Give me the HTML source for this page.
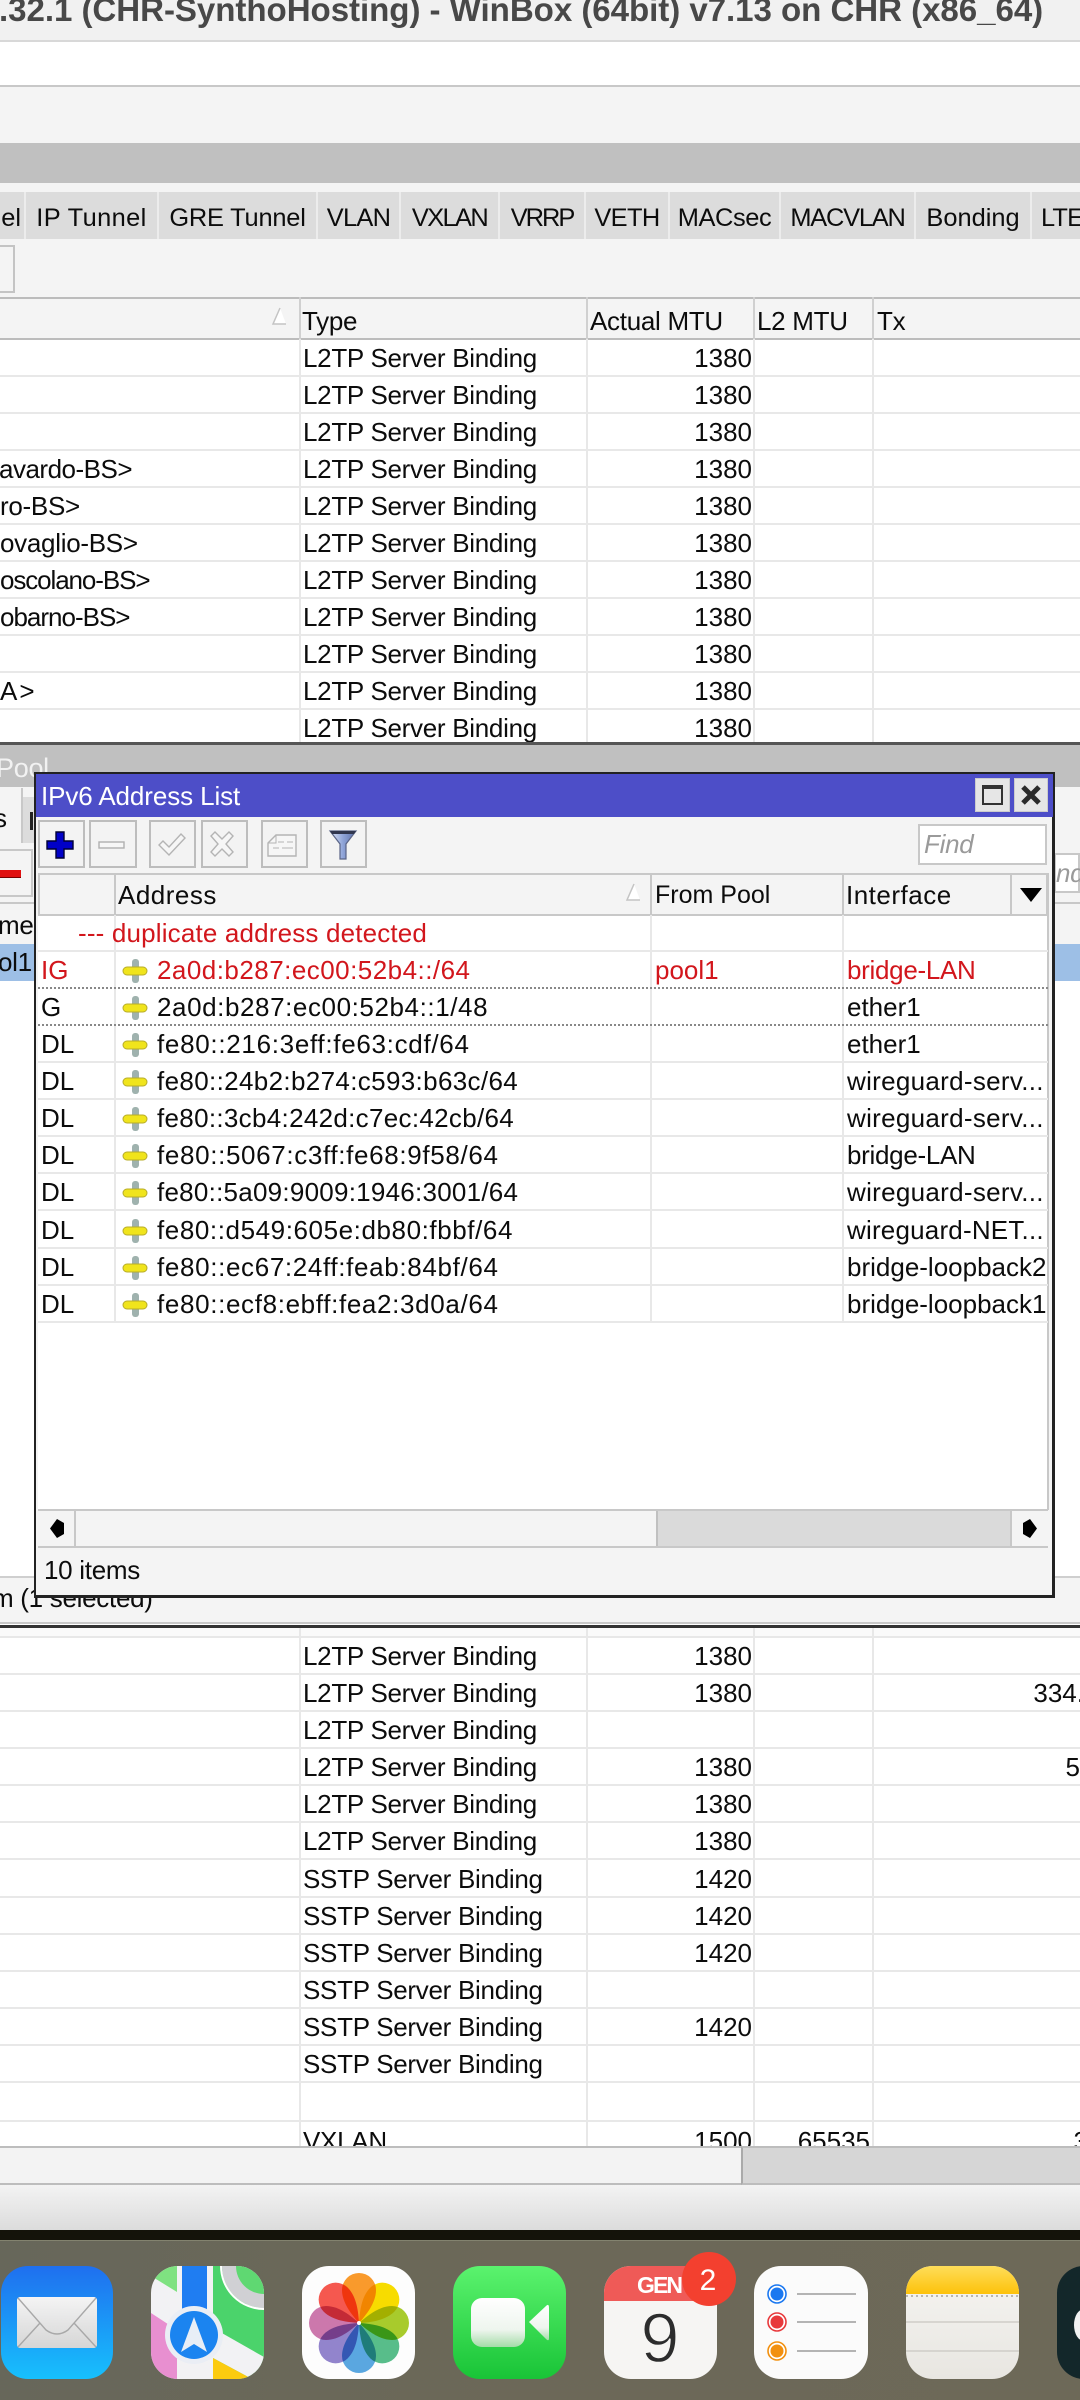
<!DOCTYPE html>
<html><head><meta charset="utf-8"><title>WinBox</title>
<style>
html,body{margin:0;padding:0;background:#fff}
#p{position:relative;width:1080px;height:2400px;overflow:hidden;background:#fff;font-family:"Liberation Sans",sans-serif;font-size:26px;letter-spacing:-.29px;color:#0c0c0c}
.a{position:absolute}
.t{position:absolute;white-space:nowrap;line-height:37px;height:37px}
.r{position:absolute;left:0;width:1080px;border-bottom:2px solid #e8e8e8;box-sizing:content-box;height:35px}
.ty{position:absolute;left:303px;top:0;line-height:36px;white-space:nowrap}
.mt{position:absolute;right:328px;top:0;line-height:36px;white-space:nowrap;letter-spacing:0}
.n{position:absolute;left:0;top:0;line-height:36px;white-space:nowrap}
.v{position:absolute;width:2px;background:#e8e8e8}
.tab{position:absolute;top:192px;height:47px;background:#dcdcdc;border-right:2px solid #ececec;font-size:25.4px;letter-spacing:0;line-height:53px;text-align:center;box-sizing:border-box;white-space:nowrap}
.w{font-size:26px;letter-spacing:0}
.wr{position:absolute;left:38px;width:1010px;height:35px;border-bottom:2px solid #e8e8e8}
.wr.d{border-bottom:2px dotted #888}
.wr span{position:absolute;top:0;line-height:36px;white-space:nowrap}
.f{left:3px}.ad{left:119px;letter-spacing:.3px}.po{left:617px}.if{left:809px}
.ic{position:absolute;left:84px;top:6px;width:26px;height:26px}
.red{color:#d2161c}
.btn{position:absolute;top:820px;height:48px;box-sizing:border-box;border:2px solid #bdbdbd;background:#f3f3f3}
</style></head><body><div id="p">

<!-- top chrome -->
<div class="a" style="left:0;top:0;width:1080px;height:42px;background:#f1f1f1;border-bottom:2px solid #d8d8d8;box-sizing:border-box"></div>
<div class="t" style="left:-1px;top:-8px;font-size:33.1px;font-weight:bold;color:#484848;letter-spacing:-.05px">.32.1 (CHR-SynthoHosting) - WinBox (64bit) v7.13 on CHR (x86_64)</div>
<div class="a" style="left:0;top:42px;width:1080px;height:45px;background:#fff;border-bottom:2px solid #c8c8c8;box-sizing:border-box"></div>
<div class="a" style="left:0;top:87px;width:1080px;height:56px;background:#f4f4f4"></div>
<div class="a" style="left:0;top:143px;width:1080px;height:40px;background:#c0c0c0"></div>
<div class="a" style="left:0;top:183px;width:1080px;height:114px;background:#f4f4f4"></div>

<!-- tabs -->
<div class="tab" style="left:-40px;width:66px;text-align:right;padding-right:3px">el</div>
<div class="tab" style="left:26px;width:133px;letter-spacing:.4px">IP Tunnel</div>
<div class="tab" style="left:159px;width:159px;letter-spacing:-.2px">GRE Tunnel</div>
<div class="tab" style="left:318px;width:83px;letter-spacing:-.7px">VLAN</div>
<div class="tab" style="left:401px;width:99px;letter-spacing:-1.6px">VXLAN</div>
<div class="tab" style="left:500px;width:86px;letter-spacing:-2px">VRRP</div>
<div class="tab" style="left:586px;width:84px;letter-spacing:-.6px">VETH</div>
<div class="tab" style="left:670px;width:111px;letter-spacing:-.4px">MACsec</div>
<div class="tab" style="left:781px;width:135px;letter-spacing:-1.2px">MACVLAN</div>
<div class="tab" style="left:916px;width:116px">Bonding</div>
<div class="tab" style="left:1032px;width:60px;text-align:left;padding-left:9px;letter-spacing:-.8px">LTE</div>
<div class="a" style="left:-20px;top:245px;width:35px;height:48px;box-sizing:border-box;border:2px solid #c4c4c4;background:#f4f4f4"></div>

<!-- upper table -->
<div class="a" style="left:0;top:297px;width:1080px;background:#f4f4f4;border-top:2px solid #bcbcbc;border-bottom:2px solid #bcbcbc;box-sizing:content-box;height:39px"></div>
<svg class="a" style="left:270px;top:306px" width="18" height="20"><path d="M10 2 L3 18 L16 18" fill="#fff" stroke="#c4c4c4" stroke-width="1.5"/></svg>
<div class="t" style="left:302px;top:303px;line-height:37px">Type</div>
<div class="t" style="left:590px;top:303px;line-height:37px">Actual MTU</div>
<div class="t" style="left:757px;top:303px;line-height:37px">L2 MTU</div>
<div class="t" style="left:877px;top:303px;line-height:37px">Tx</div>
<div class="v" style="left:299px;top:297px;height:42px;background:#d0d0d0"></div>
<div class="v" style="left:586px;top:297px;height:42px;background:#d0d0d0"></div>
<div class="v" style="left:753px;top:297px;height:42px;background:#d0d0d0"></div>
<div class="v" style="left:872px;top:297px;height:42px;background:#d0d0d0"></div>
<div class="v" style="left:299px;top:339px;height:404px"></div>
<div class="v" style="left:586px;top:339px;height:404px"></div>
<div class="v" style="left:753px;top:339px;height:404px"></div>
<div class="v" style="left:872px;top:339px;height:404px"></div>

<div class="r" style="top:340px"><span class="ty">L2TP Server Binding</span><span class="mt">1380</span></div>
<div class="r" style="top:377px"><span class="ty">L2TP Server Binding</span><span class="mt">1380</span></div>
<div class="r" style="top:414px"><span class="ty">L2TP Server Binding</span><span class="mt">1380</span></div>
<div class="r" style="top:451px"><span class="n" style="left:-1px;letter-spacing:-.5px">avardo-BS&gt;</span><span class="ty">L2TP Server Binding</span><span class="mt">1380</span></div>
<div class="r" style="top:488px"><span class="n">ro-BS&gt;</span><span class="ty">L2TP Server Binding</span><span class="mt">1380</span></div>
<div class="r" style="top:525px"><span class="n">ovaglio-BS&gt;</span><span class="ty">L2TP Server Binding</span><span class="mt">1380</span></div>
<div class="r" style="top:562px"><span class="n" style="letter-spacing:-1.1px">oscolano-BS&gt;</span><span class="ty">L2TP Server Binding</span><span class="mt">1380</span></div>
<div class="r" style="top:599px"><span class="n" style="letter-spacing:-1px">obarno-BS&gt;</span><span class="ty">L2TP Server Binding</span><span class="mt">1380</span></div>
<div class="r" style="top:636px"><span class="ty">L2TP Server Binding</span><span class="mt">1380</span></div>
<div class="r" style="top:673px"><span class="n" style="letter-spacing:2px">A&gt;</span><span class="ty">L2TP Server Binding</span><span class="mt">1380</span></div>
<div class="r" style="top:710px;height:33px;overflow:hidden;border:0"><span class="ty">L2TP Server Binding</span><span class="mt">1380</span></div>

<!-- background IP Pool window -->
<div class="a" style="left:0;top:742px;width:1080px;height:3px;background:#555"></div>
<div class="a" style="left:0;top:745px;width:1080px;height:42px;background:#c0c0c0"></div>
<div class="a" style="left:0;top:787px;width:1080px;height:157px;background:#f4f4f4"></div>
<div class="t" style="left:-4px;top:750px;color:#f2f2f2;font-size:27px">Pool</div>
<div class="a" style="left:-10px;top:788px;width:31px;height:55px;background:#f4f4f4;border-right:2px solid #c8c8c8"></div>
<div class="t" style="left:-6px;top:800px;font-size:26px">s</div>
<div class="a" style="left:23px;top:797px;width:20px;height:46px;background:#dcdcdc"></div>
<div class="a" style="left:30px;top:812px;width:3px;height:18px;background:#222"></div>
<div class="a" style="left:-10px;top:849px;width:43px;height:48px;box-sizing:border-box;border:2px solid #c8c8c8;background:#f4f4f4"></div>
<div class="a" style="left:0;top:870px;width:21px;height:7px;background:#e01010;border-bottom:1px solid #700"></div>
<div class="a" style="left:0;top:902px;width:1080px;height:2px;background:#c8c8c8"></div>
<div class="t" style="left:-2px;top:907px;font-size:26px">me</div>
<div class="a" style="left:0;top:944px;width:1080px;height:37px;background:#9dbfe6"></div>
<div class="t" style="left:-2px;top:944px;font-size:26px">ol1</div>
<div class="a" style="left:1054px;top:853px;width:26px;height:40px;background:#fff;border:2px solid #c8c8c8;box-sizing:border-box"></div>
<div class="t" style="left:1056px;top:855px;font-size:26px;font-style:italic;color:#9a9a9a">nd</div>

<!-- lower status -->
<div class="a" style="left:0;top:1576px;width:1080px;height:47px;background:#f4f4f4;border-top:2px solid #cfcfcf;box-sizing:border-box"></div>
<div class="t" style="left:-8px;top:1580px;">m (1 selected)</div>
<div class="a" style="left:0;top:1622px;width:1080px;height:2px;background:#c8c8c8"></div>
<div class="a" style="left:0;top:1625px;width:1080px;height:3px;background:#333"></div>

<!-- lower table -->
<div class="a" style="left:0;top:1628px;width:1080px;background:#fafafa;border-bottom:2px solid #e8e8e8;box-sizing:content-box;height:8px"></div>
<div class="v" style="left:299px;top:1628px;height:519px"></div>
<div class="v" style="left:586px;top:1628px;height:519px"></div>
<div class="v" style="left:753px;top:1628px;height:519px"></div>
<div class="v" style="left:872px;top:1628px;height:519px"></div>

<div class="r" style="top:1638px"><span class="ty">L2TP Server Binding</span><span class="mt">1380</span></div>
<div class="r" style="top:1675px"><span class="ty">L2TP Server Binding</span><span class="mt">1380</span><span class="mt" style="right:-4px">334.</span></div>
<div class="r" style="top:1712px"><span class="ty">L2TP Server Binding</span></div>
<div class="r" style="top:1749px"><span class="ty">L2TP Server Binding</span><span class="mt">1380</span><span class="mt" style="right:0">5</span></div>
<div class="r" style="top:1786px"><span class="ty">L2TP Server Binding</span><span class="mt">1380</span></div>
<div class="r" style="top:1823px"><span class="ty">L2TP Server Binding</span><span class="mt">1380</span></div>
<div class="r" style="top:1861px"><span class="ty">SSTP Server Binding</span><span class="mt">1420</span></div>
<div class="r" style="top:1898px"><span class="ty">SSTP Server Binding</span><span class="mt">1420</span></div>
<div class="r" style="top:1935px"><span class="ty">SSTP Server Binding</span><span class="mt">1420</span></div>
<div class="r" style="top:1972px"><span class="ty">SSTP Server Binding</span></div>
<div class="r" style="top:2009px"><span class="ty">SSTP Server Binding</span><span class="mt">1420</span></div>
<div class="r" style="top:2046px"><span class="ty">SSTP Server Binding</span></div>
<div class="r" style="top:2085px"></div>
<div class="r" style="top:2122px;height:25px;overflow:hidden;border:0"><span class="ty" style="top:1px">VXLAN</span><span class="mt" style="top:1px">1500</span><span class="mt" style="top:1px;right:210px">65535</span><span class="mt" style="top:1px;right:-8px">3</span></div>

<!-- bottom bars -->
<div class="a" style="left:0;top:2146px;width:1080px;height:39px;background:#f3f3f3;border-top:2px solid #bdbdbd;border-bottom:2px solid #bdbdbd;box-sizing:border-box"></div>
<div class="a" style="left:741px;top:2146px;width:339px;height:39px;background:#d6d6d6;border-top:2px solid #bdbdbd;border-bottom:2px solid #bdbdbd;border-left:2px solid #aaa;box-sizing:border-box"></div>
<div class="a" style="left:0;top:2185px;width:1080px;height:45px;background:linear-gradient(#f3f3f3,#dcdcdc)"></div>
<div class="a" style="left:0;top:2230px;width:1080px;height:10px;background:#14130a"></div>
<div class="a" style="left:0;top:2240px;width:1080px;height:160px;background:linear-gradient(90deg,#67675a,#6c6858 50%,#6d6958);border-top:1px solid #83836f;box-sizing:border-box"></div>

<!-- IPv6 window -->
<div class="a" style="left:34px;top:772px;width:1021px;height:826px;background:#f4f4f4;border:2px solid #222;border-right:3px solid #222;border-bottom:3px solid #222;box-sizing:border-box"></div>
<div class="a" style="left:36px;top:774px;width:1017px;height:43px;background:#4d4ec8"></div>
<div class="t w" style="left:41px;top:778px;color:#fff;font-size:26px;letter-spacing:-.1px">IPv6 Address List</div>
<div class="a" style="left:975px;top:778px;width:35px;height:34px;box-sizing:border-box;background:#e6e6e6;border:1px solid #ccc"></div>
<div class="a" style="left:982px;top:785px;width:21px;height:20px;box-sizing:border-box;border:2px solid #333;border-top:4px solid #333"></div>
<div class="a" style="left:1014px;top:778px;width:34px;height:34px;box-sizing:border-box;background:#e6e6e6;border:1px solid #ccc"></div>
<svg class="a" style="left:1014px;top:778px" width="34" height="34"><path d="M9 9 L25 25 M25 9 L9 25" stroke="#2a2a2a" stroke-width="5" fill="none"/></svg>

<!-- window toolbar -->
<div class="btn" style="left:38px;width:47px"></div>
<div class="btn" style="left:89px;width:48px"></div>
<div class="btn" style="left:149px;width:47px"></div>
<div class="btn" style="left:201px;width:47px"></div>
<div class="btn" style="left:261px;width:47px"></div>
<div class="btn" style="left:320px;width:47px"></div>
<svg class="a" style="left:30px;top:815px" width="350" height="60">
<defs><linearGradient id="fu" x1="0" y1="0" x2="1" y2="0"><stop offset="0" stop-color="#dfe6f6"/><stop offset=".5" stop-color="#8fa4d8"/><stop offset="1" stop-color="#5a6ea8"/></linearGradient></defs>
<path d="M26 17 h8 v9 h9 v8 h-9 v9 h-8 v-9 h-9 v-8 h9 z" fill="#0000c8" stroke="#000036" stroke-width="1.4"/>
<rect x="69" y="27" width="25" height="6" fill="#f6f6f6" stroke="#b0b0b0" stroke-width="1.4"/>
<path d="M129 30 l4 -4 l6 6 l12 -13 l4 4 l-16 17 z" fill="#f6f6f6" stroke="#b4b4b4" stroke-width="1.4"/>
<path d="M181 21 l4 -4 l7 7 l7 -7 l4 4 l-7 8 l7 8 l-4 4 l-7 -7 l-7 7 l-4 -4 l7 -8 z" fill="#f6f6f6" stroke="#b4b4b4" stroke-width="1.4"/>
<path d="M238 28 l8 -8 h20 v21 h-28 z" fill="#f6f6f6" stroke="#b4b4b4" stroke-width="1.4"/>
<path d="M238 28 h8 v-8 M248 27 h6 M257 27 h6 M243 33 h6 M252 33 h11" fill="none" stroke="#b4b4b4" stroke-width="1"/>
<path d="M300 16 h26 l-10 13 v15 h-6 v-15 z" fill="url(#fu)" stroke="#5a6486" stroke-width="1.2"/>
<path d="M300 16 h26 l-2 3 h-22 z" fill="#30364e"/>
</svg>
<div class="a" style="left:918px;top:824px;width:129px;height:41px;box-sizing:border-box;background:#fff;border:2px solid #c8c8c8"></div>
<div class="t" style="left:924px;top:826px;font-size:26px;font-style:italic;color:#9a9a9a">Find</div>

<!-- window table -->
<div class="a" style="left:38px;top:873px;width:1010px;height:637px;background:#fff"></div>
<div class="a" style="left:38px;top:873px;width:1010px;height:43px;background:#f4f4f4;border:2px solid #c8c8c8;box-sizing:border-box"></div>
<div class="v" style="left:114px;top:873px;height:42px;background:#c8c8c8"></div>
<div class="v" style="left:650px;top:873px;height:42px;background:#c8c8c8"></div>
<div class="v" style="left:842px;top:873px;height:42px;background:#c8c8c8"></div>
<div class="v" style="left:1010px;top:873px;height:42px;background:#c8c8c8"></div>
<div class="t w" style="left:118px;top:877px;letter-spacing:.5px">Address</div>
<div class="t w" style="left:655px;top:877px;font-size:25px">From Pool</div>
<div class="t w" style="left:846px;top:877px;letter-spacing:.5px">Interface</div>
<svg class="a" style="left:624px;top:882px" width="18" height="20"><path d="M10 2 L3 18 L16 18" fill="#fff" stroke="#c4c4c4" stroke-width="1.5"/></svg>
<svg class="a" style="left:1018px;top:886px" width="26" height="18"><path d="M2 2 H24 L13 16 z" fill="#000"/></svg>
<div class="v" style="left:114px;top:915px;height:408px"></div>
<div class="v" style="left:650px;top:915px;height:408px"></div>
<div class="v" style="left:842px;top:915px;height:408px"></div>
<div class="v" style="left:1047px;top:873px;height:637px;background:#c8c8c8"></div>

<svg width="0" height="0" style="position:absolute"><defs><symbol id="ip" viewBox="0 0 26 26"><rect x="10" y="1" width="7" height="24" rx="3" fill="#9fb2ae"/><rect x="1" y="9" width="24" height="8" rx="4" fill="#f0e41c" stroke="#b7ac2a" stroke-width="1"/></symbol></defs></svg>

<div class="wr w" style="top:915px"><span class="red" style="left:40px;letter-spacing:.17px">--- duplicate address detected</span></div>
<div class="wr w d" style="top:952px"><span class="f red">IG</span><svg class="ic"><use href="#ip"/></svg><span class="ad red" style="letter-spacing:.47px">2a0d:b287:ec00:52b4::/64</span><span class="po red">pool1</span><span class="if red" style="letter-spacing:-.3px">bridge-LAN</span></div>
<div class="wr w d" style="top:989px"><span class="f">G</span><svg class="ic"><use href="#ip"/></svg><span class="ad" style="letter-spacing:.58px">2a0d:b287:ec00:52b4::1/48</span><span class="if">ether1</span></div>
<div class="wr w" style="top:1026px"><span class="f">DL</span><svg class="ic"><use href="#ip"/></svg><span class="ad" style="letter-spacing:.7px">fe80::216:3eff:fe63:cdf/64</span><span class="if">ether1</span></div>
<div class="wr w" style="top:1063px"><span class="f">DL</span><svg class="ic"><use href="#ip"/></svg><span class="ad" style="letter-spacing:.35px">fe80::24b2:b274:c593:b63c/64</span><span class="if" style="letter-spacing:.3px">wireguard-serv...</span></div>
<div class="wr w" style="top:1100px"><span class="f">DL</span><svg class="ic"><use href="#ip"/></svg><span class="ad" style="letter-spacing:.31px">fe80::3cb4:242d:c7ec:42cb/64</span><span class="if" style="letter-spacing:.3px">wireguard-serv...</span></div>
<div class="wr w" style="top:1137px"><span class="f">DL</span><svg class="ic"><use href="#ip"/></svg><span class="ad" style="letter-spacing:.65px">fe80::5067:c3ff:fe68:9f58/64</span><span class="if" style="letter-spacing:-.3px">bridge-LAN</span></div>
<div class="wr w" style="top:1174px"><span class="f">DL</span><svg class="ic"><use href="#ip"/></svg><span class="ad" style="letter-spacing:.25px">fe80::5a09:9009:1946:3001/64</span><span class="if" style="letter-spacing:.3px">wireguard-serv...</span></div>
<div class="wr w" style="top:1212px"><span class="f">DL</span><svg class="ic"><use href="#ip"/></svg><span class="ad" style="letter-spacing:.58px">fe80::d549:605e:db80:fbbf/64</span><span class="if" style="letter-spacing:.2px">wireguard-NET...</span></div>
<div class="wr w" style="top:1249px"><span class="f">DL</span><svg class="ic"><use href="#ip"/></svg><span class="ad" style="letter-spacing:.65px">fe80::ec67:24ff:feab:84bf/64</span><span class="if">bridge-loopback2</span></div>
<div class="wr w" style="top:1286px"><span class="f">DL</span><svg class="ic"><use href="#ip"/></svg><span class="ad" style="letter-spacing:.65px">fe80::ecf8:ebff:fea2:3d0a/64</span><span class="if">bridge-loopback1</span></div>

<!-- window scrollbar -->
<div class="a" style="left:38px;top:1509px;width:1010px;height:39px;background:#f4f4f4;border-top:2px solid #c8c8c8;border-bottom:2px solid #c8c8c8;box-sizing:border-box"></div>
<div class="a" style="left:656px;top:1511px;width:354px;height:35px;background:#dadada;border-left:2px solid #c0c0c0;box-sizing:border-box"></div>
<div class="a" style="left:74px;top:1511px;width:2px;height:35px;background:#c8c8c8"></div>
<div class="a" style="left:1010px;top:1511px;width:2px;height:35px;background:#c8c8c8"></div>
<svg class="a" style="left:38px;top:1511px" width="36" height="35"><path d="M12 17.5 L19 8 L26 12 L26 23 L19 27 z" fill="#000"/></svg>
<svg class="a" style="left:1012px;top:1511px" width="36" height="35"><path d="M25 17.5 L18 8 L11 12 L11 23 L18 27 z" fill="#000"/></svg>
<div class="t" style="left:44px;top:1552px">10 items</div>

<!-- dock -->
<svg class="a" style="left:0;top:2250px" width="1080" height="150" viewBox="0 2250 1080 150">
<defs>
<linearGradient id="m" x1="0" y1="0" x2="0" y2="1"><stop offset="0" stop-color="#1f6fef"/><stop offset="1" stop-color="#17c0fd"/></linearGradient>
<linearGradient id="e" x1="0" y1="0" x2="0" y2="1"><stop offset="0" stop-color="#f4f4f4"/><stop offset="1" stop-color="#d6d6d6"/></linearGradient>
<linearGradient id="ft" x1="0" y1="0" x2="0" y2="1"><stop offset="0" stop-color="#5bf36e"/><stop offset="1" stop-color="#19c437"/></linearGradient>
<linearGradient id="cam" x1="0" y1="0" x2="0" y2="1"><stop offset="0" stop-color="#fff"/><stop offset=".65" stop-color="#eef5ee"/><stop offset="1" stop-color="#a4dca8"/></linearGradient>
<linearGradient id="ny" x1="0" y1="0" x2="0" y2="1"><stop offset="0" stop-color="#fede5a"/><stop offset="1" stop-color="#fdc20a"/></linearGradient>
<linearGradient id="np" x1="0" y1="0" x2="0" y2="1"><stop offset="0" stop-color="#f6f5f2"/><stop offset="1" stop-color="#e8e6e1"/></linearGradient>
<clipPath id="cm"><rect x="151" y="2266" width="113" height="113" rx="27"/></clipPath>
<clipPath id="cc"><rect x="604" y="2266" width="113" height="113" rx="27"/></clipPath>
<clipPath id="cn"><rect x="906" y="2266" width="113" height="113" rx="27"/></clipPath>
<path id="pet" d="M0 0 C-7 -8 -17 -20 -17 -33 A17 17 0 0 1 17 -33 C17 -20 7 -8 0 0 z"/>
</defs>
<!-- mail -->
<rect x="1" y="2266" width="112" height="113" rx="27" fill="url(#m)"/>
<rect x="17" y="2297" width="80" height="51" rx="3" fill="url(#e)"/>
<path d="M18 2298 L46 2330 Q57 2338 68 2330 L96 2298 M18 2347 L40 2323 M96 2347 L74 2323" fill="none" stroke="#a8a8a8" stroke-width="1.4"/>
<!-- maps -->
<g clip-path="url(#cm)">
<rect x="151" y="2266" width="113" height="113" fill="#f2f2f4"/>
<rect x="213" y="2266" width="51" height="113" fill="#4bd36b"/>
<path d="M151 2266 H177 V2292 L151 2276 z" fill="#7fe281"/>
<path d="M151 2313 L177 2330 V2379 H151 z" fill="#e88fd0"/>
<rect x="182" y="2266" width="25" height="60" fill="#1f7df2"/>
<path d="M213 2328 L264 2357 V2379 H252 L213 2358 z" fill="#f2f2f4"/>
<path d="M213 2358 L252 2379 H213 z" fill="#fccb0f"/>
<circle cx="264" cy="2266" r="42" fill="#d0d0d4"/><circle cx="264" cy="2266" r="28" fill="#5fd872"/>
<path d="M221 2266 A43 43 0 0 0 264 2309" fill="none" stroke="#fff" stroke-width="2"/>
</g>
<circle cx="194" cy="2335" r="29" fill="#eaeef5"/>
<circle cx="194" cy="2335" r="24" fill="#1b84f0"/>
<path d="M194 2317 L207 2352 L194 2344 L181 2352 z" fill="#e8eef6"/>
<!-- photos -->
<rect x="302" y="2266" width="113" height="113" rx="27" fill="#fdfdfd"/>
<g transform="translate(359 2323)" style="isolation:isolate">
<use href="#pet" fill="#f99a2c" style="mix-blend-mode:multiply"/>
<use href="#pet" fill="#f7dc00" transform="rotate(45)" style="mix-blend-mode:multiply"/>
<use href="#pet" fill="#a8cb2c" transform="rotate(90)" style="mix-blend-mode:multiply"/>
<use href="#pet" fill="#58bd8a" transform="rotate(135)" style="mix-blend-mode:multiply"/>
<use href="#pet" fill="#5aa7e0" transform="rotate(180)" style="mix-blend-mode:multiply"/>
<use href="#pet" fill="#9284cc" transform="rotate(225)" style="mix-blend-mode:multiply"/>
<use href="#pet" fill="#cc78ac" transform="rotate(270)" style="mix-blend-mode:multiply"/>
<use href="#pet" fill="#f5584f" transform="rotate(315)" style="mix-blend-mode:multiply"/>
</g>
<circle cx="359" cy="2323" r="2" fill="#fff"/>
<!-- facetime -->
<rect x="453" y="2266" width="113" height="113" rx="27" fill="url(#ft)"/>
<rect x="471" y="2298" width="54" height="49" rx="11" fill="url(#cam)"/>
<path d="M529 2322 L546 2306 Q549 2303 549 2308 V2338 Q549 2342 546 2339 z" fill="url(#cam)"/>
<!-- calendar -->
<g clip-path="url(#cc)">
<rect x="604" y="2266" width="113" height="113" fill="#f6f5f3"/>
<rect x="604" y="2266" width="113" height="35" fill="#ef5a57"/>
</g>
<text x="637" y="2293" font-family="Liberation Sans" font-weight="bold" font-size="23" fill="#fff" textLength="46" letter-spacing="0">GEN</text>
<text x="660" y="2362" text-anchor="middle" font-family="Liberation Sans" font-size="70" fill="#2c2c2c" stroke="#f6f5f3" stroke-width="1.4" letter-spacing="0">9</text>
<circle cx="709" cy="2279" r="27" fill="#f3402f"/>
<text x="708" y="2290" text-anchor="middle" font-family="Liberation Sans" font-size="30" fill="#fff" letter-spacing="0">2</text>
<!-- reminders -->
<rect x="754" y="2266" width="114" height="113" rx="27" fill="#fbfbfb"/>
<circle cx="777" cy="2294" r="9" fill="#fff" stroke="#1b78f0" stroke-width="1.6"/><circle cx="777" cy="2294" r="6.5" fill="#1b78f0"/>
<circle cx="777" cy="2322" r="9" fill="#fff" stroke="#e8393c" stroke-width="1.6"/><circle cx="777" cy="2322" r="6.5" fill="#e8393c"/>
<circle cx="777" cy="2351" r="9" fill="#fff" stroke="#f2900f" stroke-width="1.6"/><circle cx="777" cy="2351" r="6.5" fill="#f2900f"/>
<path d="M797 2294 H856 M797 2322 H856 M797 2351 H856" stroke="#b4b4b4" stroke-width="2"/>
<!-- notes -->
<g clip-path="url(#cn)">
<rect x="906" y="2266" width="113" height="113" fill="url(#np)"/>
<rect x="906" y="2266" width="113" height="28" fill="url(#ny)"/>
<path d="M906 2296 H1019" stroke="#b9b7b2" stroke-width="2" stroke-dasharray="2 3"/>
<path d="M906 2322 H1019 M906 2351 H1019" stroke="#cfcdc8" stroke-width="1.5"/>
</g>
<!-- next -->
<rect x="1057" y="2266" width="60" height="113" rx="27" fill="#13272a"/>
<ellipse cx="1084" cy="2325" rx="10" ry="16" fill="#f2f2f2"/>
</svg>

</div></body></html>
